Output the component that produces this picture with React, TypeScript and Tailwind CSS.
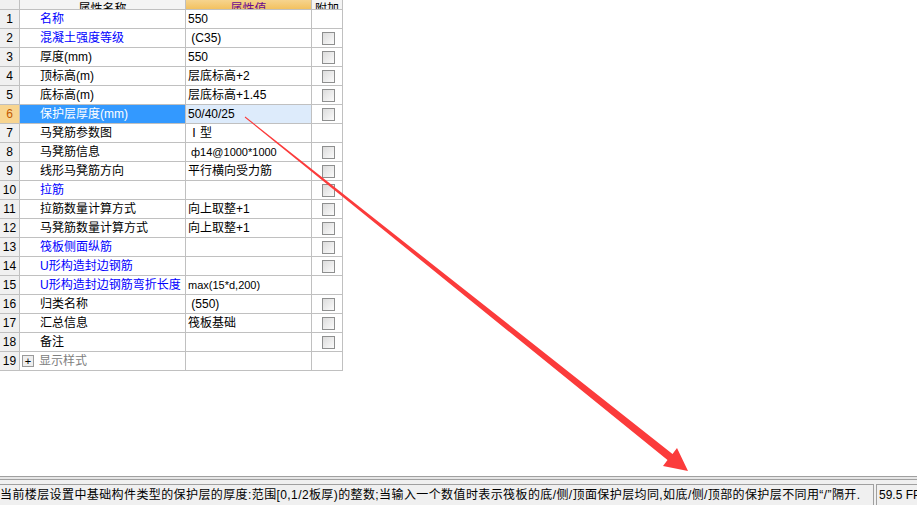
import React from "react";

type Row = {
  name: string;
  value?: string;
  blue?: boolean;
  check?: boolean;
  small?: boolean;
};

const rows: Row[] = [
  { name: "名称", value: "550", blue: true },
  { name: "混凝土强度等级", value: " (C35)", blue: true, check: true },
  { name: "厚度(mm)", value: "550", check: true },
  { name: "顶标高(m)", value: "层底标高+2", check: true },
  { name: "底标高(m)", value: "层底标高+1.45", check: true },
  { name: "保护层厚度(mm)", value: "50/40/25", check: true },
  { name: "马凳筋参数图", value: "Ⅰ型" },
  { name: "马凳筋信息", value: " ф14@1000*1000", check: true, small: true },
  { name: "线形马凳筋方向", value: "平行横向受力筋", check: true },
  { name: "拉筋", value: "", blue: true, check: true },
  { name: "拉筋数量计算方式", value: "向上取整+1", check: true },
  { name: "马凳筋数量计算方式", value: "向上取整+1", check: true },
  { name: "筏板侧面纵筋", value: "", blue: true, check: true },
  { name: "U形构造封边钢筋", value: "", blue: true, check: true },
  { name: "U形构造封边钢筋弯折长度", value: "max(15*d,200)", blue: true, small: true },
  { name: "归类名称", value: " (550)", check: true },
  { name: "汇总信息", value: "筏板基础", check: true },
  { name: "备注", value: "", check: true },
];

function CheckBox() {
  return (
    <div className="h-[13px] w-[13px] border border-[#8e8f8f] bg-gradient-to-br from-[#dcdcdc] to-[#fbfbfb]" />
  );
}

export default function App() {
  const font = { fontFamily: '"Liberation Sans", "Noto Sans CJK SC", sans-serif' };
  return (
    <div className="relative flex h-[505px] w-[917px] flex-col overflow-hidden bg-white text-[12px] text-black" style={font}>
      {/* property table */}
      <div className="flex w-[343px] flex-col">
        <div className="flex h-[10px] overflow-hidden border-b border-[#c0c0c0]">
          <div className="w-[20px] border-r border-[#c0c0c0] bg-[#f0f0f0]" />
          <div className="flex w-[166px] items-end justify-center border-r border-[#c0c0c0] bg-[#f4f4f4] leading-[12px]">
            <span className="mb-[-6px]">属性名称</span>
          </div>
          <div className="flex w-[126px] items-end justify-center border-r border-[#c0c0c0] bg-gradient-to-b from-[#f6d48e] to-[#f2c15f] leading-[12px] text-[#6b0a8f]">
            <span className="mb-[-6px]">属性值</span>
          </div>
          <div className="flex w-[31px] items-end justify-center border-r border-[#c0c0c0] bg-[#f4f4f4] leading-[12px]">
            <span className="mb-[-6px]">附加</span>
          </div>
        </div>

        {rows.map((r, i) => {
          const sel = i === 5;
          return (
            <div key={i} className="flex h-[19px] border-b border-[#c0c0c0] leading-[19px]">
              <div
                className={
                  sel
                    ? "w-[20px] border-r border-[#c0c0c0] bg-[#f8d590] text-center text-[#c25a00]"
                    : "w-[20px] border-r border-[#c0c0c0] bg-[#f0f0f0] text-center"
                }
              >
                {i + 1}
              </div>
              <div
                className={
                  sel
                    ? "w-[166px] whitespace-nowrap border-r border-[#c0c0c0] bg-[#3399ff] pl-[20px] text-white"
                    : r.blue
                    ? "w-[166px] whitespace-nowrap border-r border-[#c0c0c0] pl-[20px] text-[#0000ff]"
                    : "w-[166px] whitespace-nowrap border-r border-[#c0c0c0] pl-[20px]"
                }
              >
                {r.name}
              </div>
              <div
                className={
                  sel
                    ? "w-[126px] whitespace-pre border-r border-[#c0c0c0] bg-[#ddebfb] pl-[2px]"
                    : r.small
                    ? "w-[126px] whitespace-pre border-r border-[#c0c0c0] pl-[2px] text-[11px]"
                    : "w-[126px] whitespace-pre border-r border-[#c0c0c0] pl-[2px]"
                }
              >
                {r.value}
              </div>
              <div className="flex w-[31px] items-center justify-center border-r border-[#c0c0c0] pl-[2px]">
                {r.check && <CheckBox />}
              </div>
            </div>
          );
        })}

        <div className="flex h-[19px] border-b border-[#c0c0c0] leading-[19px]">
          <div className="w-[20px] border-r border-[#c0c0c0] bg-[#f0f0f0] text-center">19</div>
          <div className="flex w-[166px] items-center gap-[5px] border-r border-[#c0c0c0] pl-[2px] text-[#808080]">
            <div className="flex h-[12px] w-[12px] items-center justify-center border border-[#9a9a9a] bg-[#eeeeee] text-[11px] leading-none text-black">
              +
            </div>
            <span>显示样式</span>
          </div>
          <div className="w-[126px] border-r border-[#c0c0c0]" />
          <div className="w-[31px] border-r border-[#c0c0c0]" />
        </div>
      </div>

      <div className="flex-1" />

      {/* bottom status bar */}
      <div className="flex h-[29px] flex-col">
        <div className="h-px bg-[#a0a0a0]" />
        <div className="h-[2px] bg-[#e6e6e6]" />
        <div className="h-px bg-[#a0a0a0]" />
        <div className="flex flex-1 items-end bg-[#f0f0f0]">
          <div className="flex h-[21px] w-[874px] items-center overflow-hidden whitespace-nowrap border-t border-r border-[#a0a0a0] bg-[#f0f0f0] tracking-[0.4px]">
            当前楼层设置中基础构件类型的保护层的厚度:范围[0,1/2板厚)的整数;当输入一个数值时表示筏板的底/侧/顶面保护层均同,如底/侧/顶部的保护层不同用“/”隔开.
          </div>
          <div className="ml-[2px] flex h-[21px] flex-1 items-center overflow-hidden whitespace-nowrap border-t border-l border-[#a0a0a0] pl-[2px]">
            59.5 FPS
          </div>
        </div>
      </div>

      {/* red annotation arrow */}
      <svg className="pointer-events-none absolute left-0 top-0" width="917" height="505" viewBox="0 0 917 505">
        <polygon
          points="244.7,117.4 667.5,460.1 663,466 688,471 677,448 672.5,453.9 245.3,116.6"
          fill="#fb3b3b"
        />
      </svg>
    </div>
  );
}
